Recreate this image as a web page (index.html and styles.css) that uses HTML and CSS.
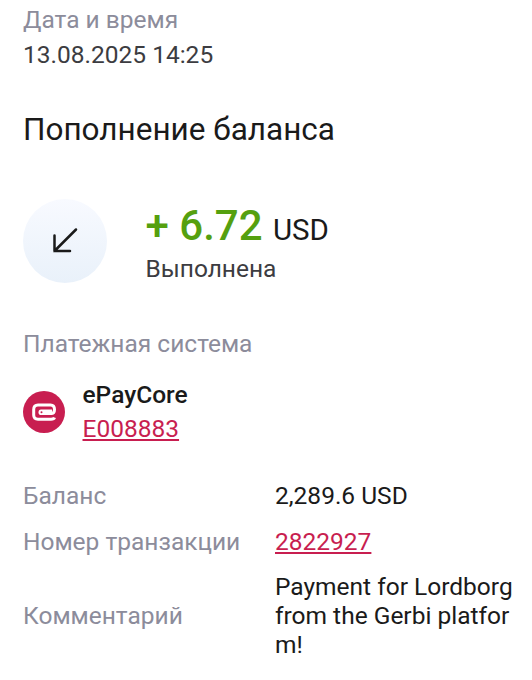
FILE: index.html
```html
<!DOCTYPE html>
<html lang="ru">
<head>
    <meta charset="UTF-8">
    <meta name="viewport" content="width=device-width, initial-scale=1.0">
    <title>Пополнение баланса</title>
    <link rel="stylesheet" href="styles.css">
</head>
<body>

<div class="transaction">
    <div class="label">Дата и время</div>
    <div class="date">13.08.2025 14:25</div>
    <h1>Пополнение баланса</h1>

    <div class="summary">
        <div class="summary-icon">
            <svg width="84" height="84" viewBox="0 0 84 84" fill="none" stroke="#1a1a1a" stroke-width="2.500">
                <path d="M53 30.500 L31.500 52 M31.500 36.500 V52 H47" stroke-linecap="round"/>
            </svg>
        </div>
        <div>
            <div class="amount"><b>+ 6.72</b> <span>USD</span></div>
            <div class="status">Выполнена</div>
        </div>
    </div>

    <div class="label">Платежная система</div>
    <div class="payment">
        <svg class="payment-logo" width="42" height="42" viewBox="0 0 42 42" fill="none">
            <circle cx="21" cy="21" r="21" fill="#c81e50"/>
            <path d="M17 22.500 H28 Q31.500 22.500 31.500 18.500 Q31.500 14 27.500 14 H15 Q10.700 14 10.700 18.500 V24 Q10.700 28.200 15 28.200 H28 Q31 28.200 31.500 26.500" stroke="#fff" stroke-width="3"/>
            <path d="M18 18.500 H29 V24 H18 Q15.500 24 15.500 21.200 Q15.500 18.500 18 18.500Z" fill="#fff"/>
            <circle cx="18.500" cy="21.300" r="1" fill="#c81e50"/>
        </svg>
        <div>
            <div class="payment-name">ePayCore</div>
            <a href="#">E008883</a>
        </div>
    </div>

    <div class="details">
        <div class="label">Баланс</div>
        <div class="value">2,289.6 USD</div>
        <div class="label">Номер транзакции</div>
        <div class="value"><a href="#">2822927</a></div>
        <div class="label">Комментарий</div>
        <div class="value">Payment for Lordborg from the Gerbi platform!</div>
    </div>
</div>

</body>
</html>
```
FILE: styles.css
```css
body {
    margin: 0;
    background-color: #ffffff;
    color: #1a1a1a;
    font-family: Roboto, Arial, sans-serif;
    font-size: 24.5px;
    line-height: 28.7px;
}
.transaction {
    padding: 6px 19px 0 23px;
}
.label {
    color: #8c8c9b;
}
.date {
    margin-top: 6.5px;
    color: #3c3c41;
}
h1 {
    margin: 41.1px 0 50px;
    font-size: 31.5px;
    line-height: 38px;
    font-weight: 400;
}
.summary {
    display: flex;
    gap: 38.5px;
    margin-bottom: 46.2px;
}
.summary-icon {
    width: 84px;
    height: 84px;
    border-radius: 50%;
    background: linear-gradient(#f8faff, #e9f1fa);
}
.amount {
    font-size: 29.5px;
    line-height: 54px;
}
.amount b {
    margin-right: 3px;
    font-size: 42px;
    font-weight: 500;
    color: #55a00f;
}
.status {
    margin-top: -2px;
    color: #3c3c41;
}
.payment {
    display: flex;
    align-items: center;
    gap: 17.5px;
    margin: 22px 0 38.4px;
}
.payment-name {
    margin-bottom: 5.5px;
    font-weight: 500;
}
a {
    color: #c81e50;
}
.details {
    display: grid;
    grid-template-columns: 252px 1fr;
    row-gap: 17px;
    align-items: center;
}
.value {
    word-break: break-all;
}
```
